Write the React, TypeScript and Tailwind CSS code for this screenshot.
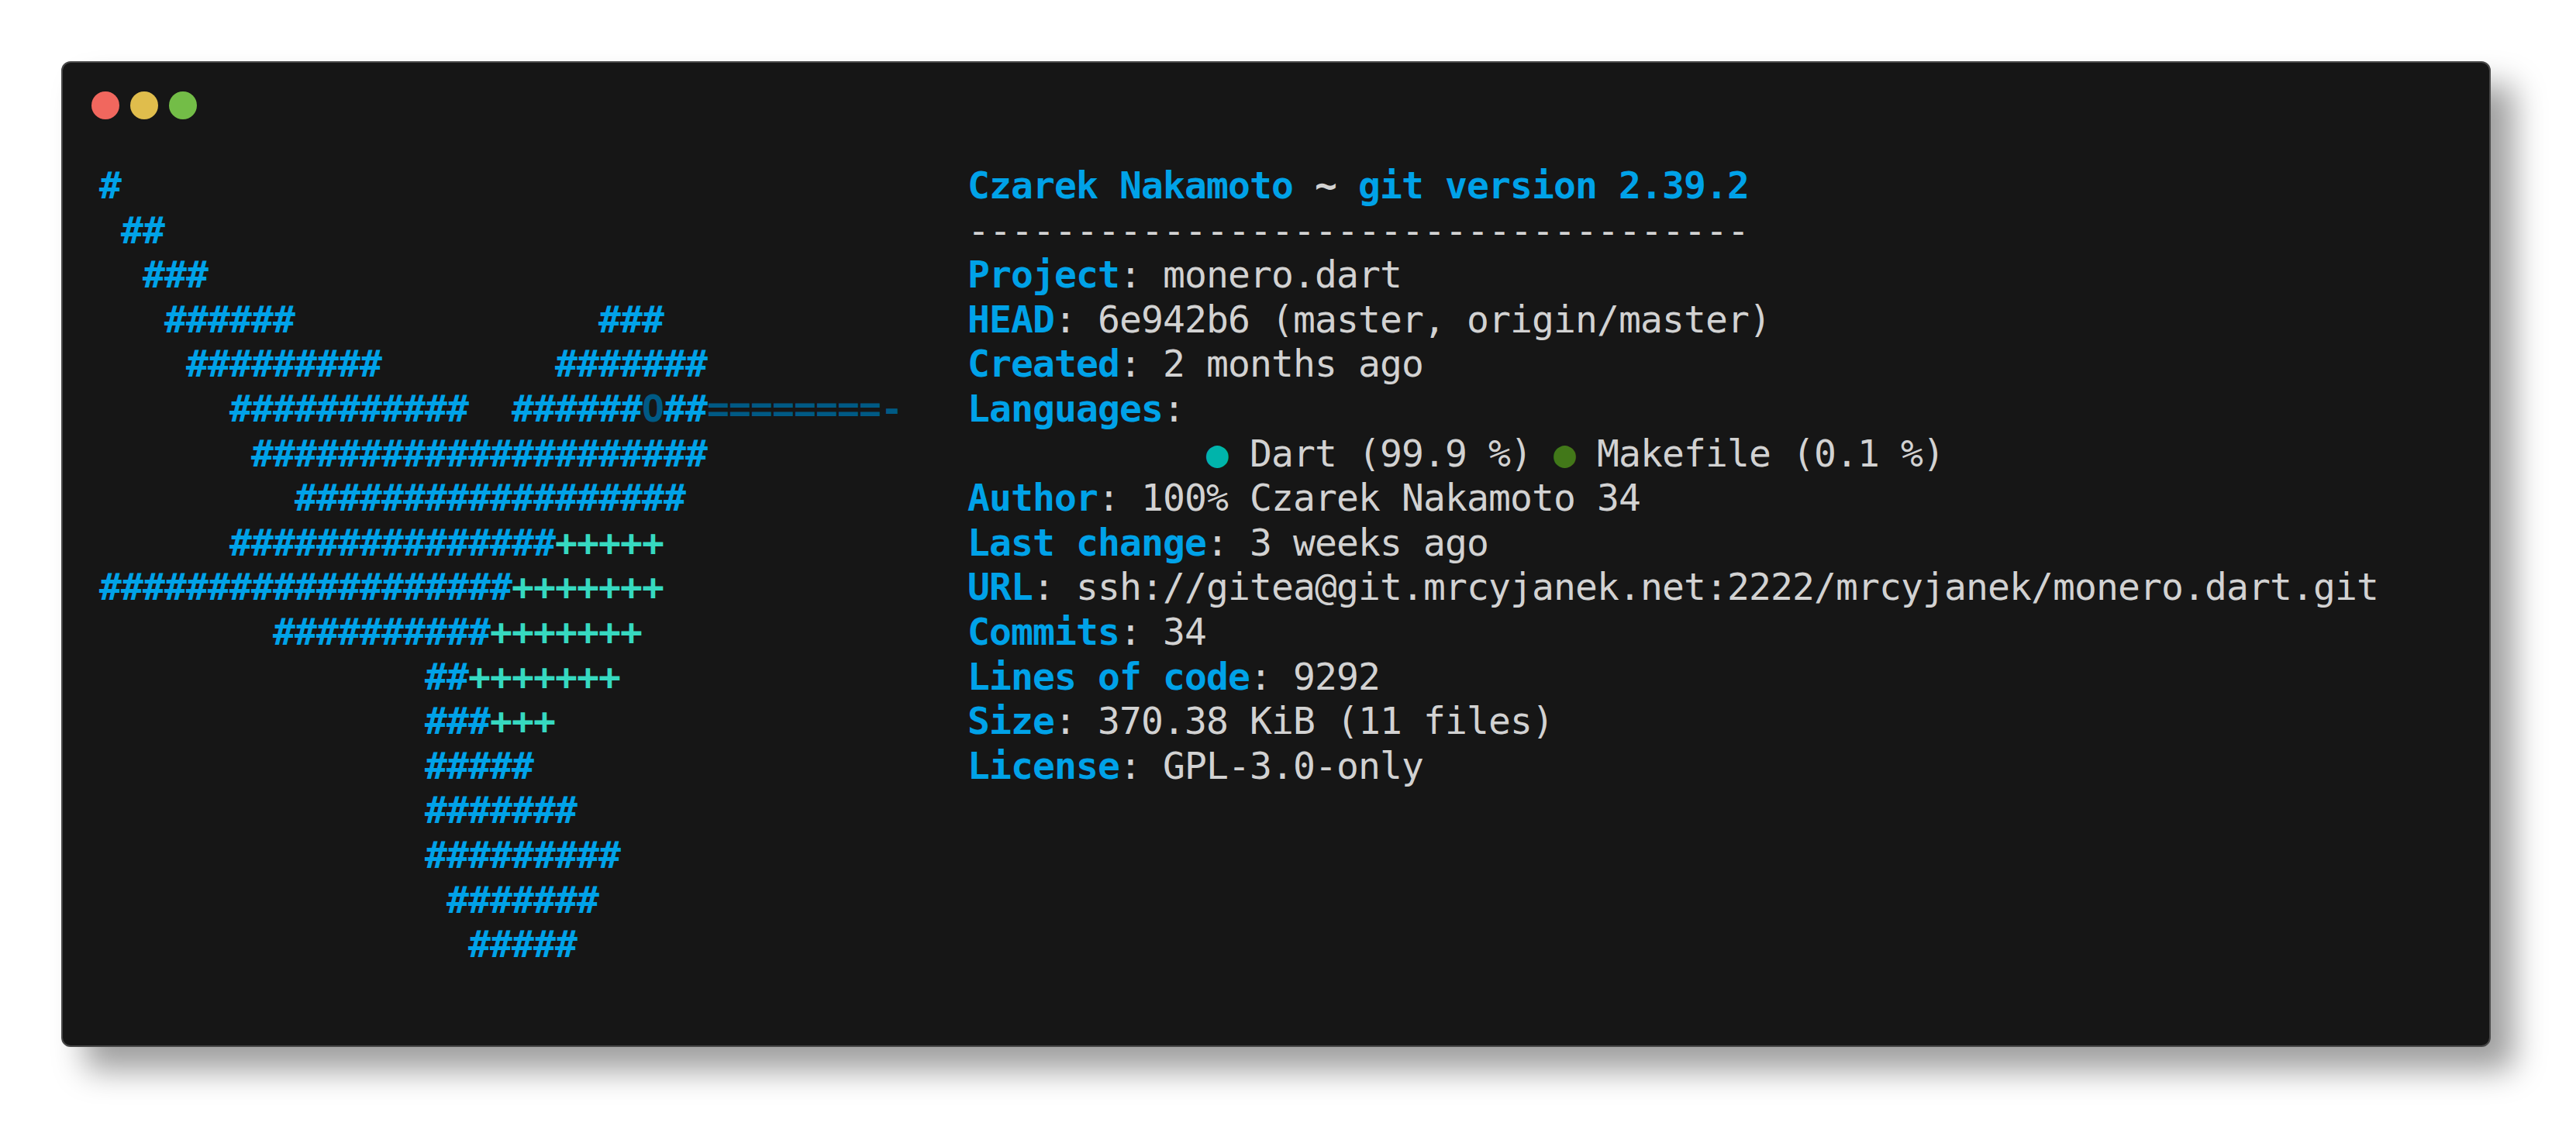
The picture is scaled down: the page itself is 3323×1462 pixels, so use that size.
const B = "text-[#00a2e8]";
const T = "text-[#36d9c0]";

type Seg = [string, string?];
const art: Seg[][] = [
  [["#"]],
  [[" ##"]],
  [["  ###"]],
  [["   ######" + " ".repeat(14) + "###"]],
  [["    #########" + " ".repeat(8) + "#######"]],
  [["      ###########  ######"], ["O", "text-[#005a85]"], ["##"], ["========-", "text-[#005a85]"]],
  [["       #####################"]],
  [["         ##################"]],
  [["      ###############"], ["+++++", T]],
  [["###################"], ["+++++++", T]],
  [["        ##########"], ["+++++++", T]],
  [["               ##"], ["+++++++", T]],
  [["               ###"], ["+++", T]],
  [["               #####"]],
  [["               #######"]],
  [["               #########"]],
  [["                #######"]],
  [["                 #####"]],
];

const rows: [string, string][] = [
  ["Project", " monero.dart"],
  ["HEAD", " 6e942b6 (master, origin/master)"],
  ["Created", " 2 months ago"],
  ["Languages", ""],
];
const rows2: [string, string][] = [
  ["Author", " 100% Czarek Nakamoto 34"],
  ["Last change", " 3 weeks ago"],
  ["URL", " ssh://gitea@git.mrcyjanek.net:2222/mrcyjanek/monero.dart.git"],
  ["Commits", " 34"],
  ["Lines of code", " 9292"],
  ["Size", " 370.38 KiB (11 files)"],
  ["License", " GPL-3.0-only"],
];

function Row({ k, v }: { k: string; v: string }) {
  return (
    <div className="h-[57.6px] whitespace-pre">
      <span className={`font-bold ${B}`}>{k}</span>
      <span>:{v}</span>
    </div>
  );
}

export default function App() {
  return (
    <div className="min-h-screen bg-white pt-[79px] pl-[79px]">
      <div className="w-[3134px] h-[1272px] rounded-[12px] border-2 border-[#484848] bg-[#161616] shadow-[30px_30px_40px_rgba(0,0,0,0.38)] flex flex-col">
        <div className="flex gap-[14px] pl-[37px] pt-[37px]">
          <div className="w-9 h-9 rounded-full bg-[#f1675e]" />
          <div className="w-9 h-9 rounded-full bg-[#e0bd4c]" />
          <div className="w-9 h-9 rounded-full bg-[#73bd47]" />
        </div>
        <div className="flex pl-[47px] pt-[57px] font-['DejaVu_Sans_Mono',monospace] text-[48px] tracking-[-0.9px] leading-[57.6px] text-[#d2d2d2]">
          <div className="w-[1120px] shrink-0 font-bold">
            {art.map((line, i) => (
              <div key={i} className={`h-[57.6px] whitespace-pre ${B}`}>
                {line.map(([t, c], j) => (
                  <span key={j} className={c}>{t}</span>
                ))}
              </div>
            ))}
          </div>
          <div>
            <div className="h-[57.6px] whitespace-pre font-bold">
              <span className={B}>Czarek Nakamoto</span>
              <span className="text-[#d2d2d2]"> ~ </span>
              <span className={B}>git version 2.39.2</span>
            </div>
            <div className="h-[57.6px] whitespace-pre">{"-".repeat(36)}</div>
            {rows.map(([k, v]) => <Row key={k} k={k} v={v} />)}
            <div className="h-[57.6px] whitespace-pre">
              {" ".repeat(11)}
              <span className="text-[#00b4ab]">●</span>
              {" Dart (99.9 %) "}
              <span className="text-[#427819]">●</span>
              {" Makefile (0.1 %)"}
            </div>
            {rows2.map(([k, v]) => <Row key={k} k={k} v={v} />)}
          </div>
        </div>
      </div>
    </div>
  );
}
